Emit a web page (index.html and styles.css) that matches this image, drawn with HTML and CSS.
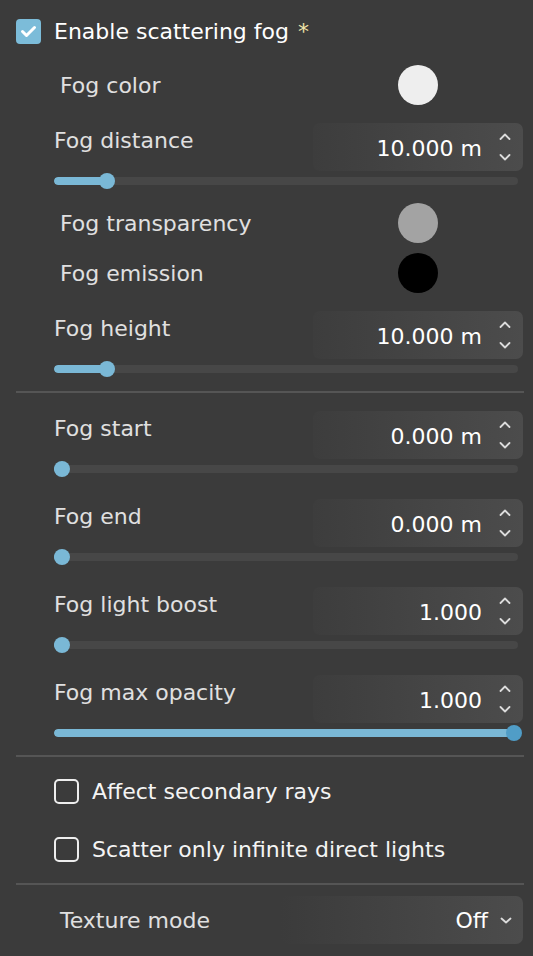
FILE: index.html
```html
<!DOCTYPE html>
<html lang="en">

<head>
    <meta charset="UTF-8">
    <meta name="viewport" content="width=device-width, initial-scale=1.0">
    <title>Scattering fog</title>
    <link rel="stylesheet" href="styles.css">
</head>

<body>
    <div class="panel">

        <label class="check main">
            <span class="box checked">
                <svg width="25" height="25" viewBox="0 0 25 25"><path d="M6.5 12.5 L10.5 16.5 L18.5 8.5" fill="none" stroke="#fff" stroke-width="3" stroke-linecap="round" stroke-linejoin="round"/></svg>
            </span>
            <span class="checkText">Enable scattering fog <span class="star">*</span></span>
        </label>

        <div class="colorRow first">
            <span class="label">Fog color</span>
            <div class="right"><span class="swatch" style="background:#eeeeee"></span></div>
        </div>

        <div class="field gapColor">
            <div class="fieldHead">
                <span class="label">Fog distance</span>
                <div class="spin">
                    <span class="value">10.000 m</span>
                    <svg class="arrows" width="12" height="28" viewBox="0 0 12 28"><path d="M1.5 6 L6 1.5 L10.5 6 M1.5 22 L6 26.5 L10.5 22" fill="none" stroke="#dcdcdc" stroke-width="1.8" stroke-linecap="round" stroke-linejoin="round"/></svg>
                </div>
            </div>
            <div class="slider" style="--v:0.1"><div class="track"><div class="fill"></div></div><span class="thumb"></span></div>
        </div>

        <div class="colorRow afterField">
            <span class="label">Fog transparency</span>
            <div class="right"><span class="swatch" style="background:#a3a3a3"></span></div>
        </div>

        <div class="colorRow next">
            <span class="label">Fog emission</span>
            <div class="right"><span class="swatch" style="background:#000000"></span></div>
        </div>

        <div class="field gapColor">
            <div class="fieldHead">
                <span class="label">Fog height</span>
                <div class="spin">
                    <span class="value">10.000 m</span>
                    <svg class="arrows" width="12" height="28" viewBox="0 0 12 28"><path d="M1.5 6 L6 1.5 L10.5 6 M1.5 22 L6 26.5 L10.5 22" fill="none" stroke="#dcdcdc" stroke-width="1.8" stroke-linecap="round" stroke-linejoin="round"/></svg>
                </div>
            </div>
            <div class="slider" style="--v:0.1"><div class="track"><div class="fill"></div></div><span class="thumb"></span></div>
        </div>

        <div class="divider"></div>

        <div class="field afterDivider">
            <div class="fieldHead">
                <span class="label">Fog start</span>
                <div class="spin">
                    <span class="value">0.000 m</span>
                    <svg class="arrows" width="12" height="28" viewBox="0 0 12 28"><path d="M1.5 6 L6 1.5 L10.5 6 M1.5 22 L6 26.5 L10.5 22" fill="none" stroke="#dcdcdc" stroke-width="1.8" stroke-linecap="round" stroke-linejoin="round"/></svg>
                </div>
            </div>
            <div class="slider" style="--v:0"><div class="track"><div class="fill"></div></div><span class="thumb"></span></div>
        </div>

        <div class="field">
            <div class="fieldHead">
                <span class="label">Fog end</span>
                <div class="spin">
                    <span class="value">0.000 m</span>
                    <svg class="arrows" width="12" height="28" viewBox="0 0 12 28"><path d="M1.5 6 L6 1.5 L10.5 6 M1.5 22 L6 26.5 L10.5 22" fill="none" stroke="#dcdcdc" stroke-width="1.8" stroke-linecap="round" stroke-linejoin="round"/></svg>
                </div>
            </div>
            <div class="slider" style="--v:0"><div class="track"><div class="fill"></div></div><span class="thumb"></span></div>
        </div>

        <div class="field">
            <div class="fieldHead">
                <span class="label">Fog light boost</span>
                <div class="spin">
                    <span class="value">1.000</span>
                    <svg class="arrows" width="12" height="28" viewBox="0 0 12 28"><path d="M1.5 6 L6 1.5 L10.5 6 M1.5 22 L6 26.5 L10.5 22" fill="none" stroke="#dcdcdc" stroke-width="1.8" stroke-linecap="round" stroke-linejoin="round"/></svg>
                </div>
            </div>
            <div class="slider" style="--v:0"><div class="track"><div class="fill"></div></div><span class="thumb"></span></div>
        </div>

        <div class="field">
            <div class="fieldHead">
                <span class="label">Fog max opacity</span>
                <div class="spin">
                    <span class="value">1.000</span>
                    <svg class="arrows" width="12" height="28" viewBox="0 0 12 28"><path d="M1.5 6 L6 1.5 L10.5 6 M1.5 22 L6 26.5 L10.5 22" fill="none" stroke="#dcdcdc" stroke-width="1.8" stroke-linecap="round" stroke-linejoin="round"/></svg>
                </div>
            </div>
            <div class="slider" style="--v:1"><div class="track"><div class="fill"></div></div><span class="thumb active"></span></div>
        </div>

        <div class="divider"></div>

        <label class="check sub first">
            <span class="box"></span>
            <span class="checkText">Affect secondary rays</span>
        </label>

        <label class="check sub second">
            <span class="box"></span>
            <span class="checkText">Scatter only infinite direct lights</span>
        </label>

        <div class="divider last"></div>

        <div class="selectRow">
            <span class="label">Texture mode</span>
            <div class="dropdown">
                <span class="value">Off</span>
                <svg width="12" height="7" viewBox="0 0 12 7"><path d="M1.5 1.5 L6 5.5 L10.5 1.5" fill="none" stroke="#dcdcdc" stroke-width="1.8" stroke-linecap="round" stroke-linejoin="round"/></svg>
            </div>
        </div>

    </div>
</body>

</html>
```

FILE: styles.css
```css
body {
    margin: 0;
    background: #3b3b3b;
    font-family: "DejaVu Sans", "Liberation Sans", sans-serif;
    font-size: 22px;
    line-height: 26px;
    color: #e0e0e0;
}
.panel {
    width: 533px;
    height: 956px;
    box-sizing: border-box;
    padding: 0 10px 0 16px;
    overflow: hidden;
}

/* checkboxes */
.check {
    display: flex;
    align-items: center;
    gap: 13px;
    height: 25px;
    color: #f4f4f4;
}
.check.main {
    margin-top: 19px;
    color: #fff;
}
.check.sub {
    margin-left: 38px;
}
.check.sub.first {
    margin-top: 22px;
}
.check.sub.second {
    margin-top: 33px;
}
.box {
    width: 25px;
    height: 25px;
    box-sizing: border-box;
    border: 2px solid #eeeeee;
    border-radius: 5px;
    flex-shrink: 0;
}
.box.checked {
    border: none;
    background: #7cbcd9;
    border-radius: 4px;
}
.box svg {
    display: block;
}
.star {
    color: #f0e4a8;
    margin-left: 2px;
}

/* color pickers */
.colorRow {
    display: flex;
    align-items: center;
    height: 40px;
    padding-left: 44px;
}
.colorRow.first {
    margin-top: 21px;
}
.colorRow.afterField {
    margin-top: 14px;
}
.colorRow.next {
    margin-top: 10px;
}
.colorRow .label {
    flex: 1;
    padding-top: 2px;
}
.colorRow .right {
    width: 210px;
    display: flex;
    justify-content: center;
}
.swatch {
    width: 40px;
    height: 40px;
    border-radius: 50%;
}

/* number fields */
.field {
    margin-left: 38px;
    margin-top: 22px;
}
.field.gapColor {
    margin-top: 18px;
}
.field.afterDivider {
    margin-top: 18px;
}
.fieldHead {
    display: flex;
    height: 48px;
}
.fieldHead .label {
    flex: 1;
    padding-top: 5px;
}
.spin {
    width: 210px;
    display: flex;
    justify-content: flex-end;
    align-items: center;
    padding-right: 12px;
    box-sizing: border-box;
    border-radius: 7px;
    background: linear-gradient(90deg, #3d3d3d, #4c4c4c);
}
.value {
    color: #fff;
    padding-top: 3px;
}
.spin .value {
    margin-right: 17px;
}
.arrows {
    display: block;
}

/* sliders */
.slider {
    position: relative;
    height: 16px;
    margin-top: 2px;
    margin-right: 5px;
}
.track {
    position: absolute;
    left: 0;
    right: 0;
    top: 4px;
    height: 8px;
    border-radius: 4px;
    background: #474747;
    overflow: hidden;
}
.fill {
    height: 100%;
    width: calc(var(--v) * (100% - 16px) + 8px);
    background: #7ab8d6;
    border-radius: 4px;
}
.thumb {
    position: absolute;
    top: 0;
    left: calc(var(--v) * (100% - 16px));
    width: 16px;
    height: 16px;
    border-radius: 50%;
    background: #7ab8d6;
}
.thumb.active {
    left: calc(100% - 12px);
    background: #509dc7;
}

.divider {
    height: 2px;
    background: #555555;
    margin-top: 14px;
    margin-right: -1px;
}
.divider.last {
    margin-top: 21px;
}

/* dropdown */
.selectRow {
    display: flex;
    align-items: center;
    height: 48px;
    margin-top: 11px;
    padding-left: 44px;
}
.selectRow .label {
    flex: 1;
    padding-top: 2px;
}
.dropdown {
    width: 243px;
    height: 48px;
    display: flex;
    justify-content: flex-end;
    align-items: center;
    gap: 12px;
    padding-right: 11px;
    box-sizing: border-box;
    border-radius: 7px;
    background: linear-gradient(90deg, #3b3b3b, #4c4c4c);
}
.dropdown .value {
    padding-top: 2px;
}
.dropdown svg {
    display: block;
}
```
